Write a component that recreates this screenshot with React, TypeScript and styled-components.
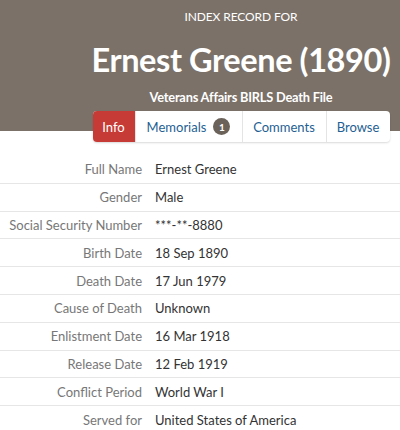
import React from "react";
import styled, { createGlobalStyle } from "styled-components";

const GlobalStyle = createGlobalStyle`
  html, body {
    margin: 0;
    padding: 0;
    background: #ffffff;
    font-family: Lato, "Noto Sans", sans-serif;
  }
`;

const Page = styled.div`
  width: 400px;
  height: 430px;
  overflow: hidden;
  background: #ffffff;
`;

const Header = styled.header`
  background: #7b7168;
  color: #ffffff;
  height: 131px;
  padding-left: 82px;
  display: flex;
  flex-direction: column;
  align-items: center;
  box-sizing: border-box;
`;

const Kicker = styled.div`
  margin-top: 9px;
  font-size: 12px;
  letter-spacing: -0.1px;
  line-height: 16px;
`;

const Title = styled.h1`
  margin: 15px 0 0;
  font-size: 32.5px;
  font-weight: 700;
  letter-spacing: -0.4px;
  line-height: 40px;
  white-space: nowrap;
`;

const Subtitle = styled.div`
  margin-top: 8px;
  font-size: 12.8px;
  font-weight: 700;
  letter-spacing: -0.2px;
  line-height: 18px;
`;

const TabsWrap = styled.div`
  padding-left: 82px;
  display: flex;
  justify-content: center;
  margin-top: -20px;
`;

const Tabs = styled.nav`
  display: flex;
  height: 31px;
  background: #ffffff;
  border-radius: 4px;
  box-shadow: 0 1px 2px rgba(0, 0, 0, 0.15);
`;

const Tab = styled.a<{ $active?: boolean; $w: number }>`
  width: ${(p) => p.$w}px;
  display: flex;
  align-items: center;
  justify-content: center;
  gap: 7px;
  font-size: 13px;
  color: ${(p) => (p.$active ? "#ffffff" : "#1f5f93")};
  background: ${(p) => (p.$active ? "#c63b36" : "transparent")};
  border-left: ${(p) => (p.$active ? "none" : "1px solid #e4e4e4")};
  &:first-child {
    border-radius: 4px 0 0 4px;
    border-left: none;
  }
  &:last-child {
    border-radius: 0 4px 4px 0;
  }
`;

const Badge = styled.span`
  width: 17px;
  height: 17px;
  border-radius: 50%;
  background: #6b6259;
  color: #ffffff;
  font-size: 10px;
  font-weight: 700;
  display: flex;
  align-items: center;
  justify-content: center;
`;

const Facts = styled.dl`
  margin: 14px 0 0;
`;

const FactRow = styled.div`
  display: grid;
  grid-template-columns: 142px 1fr;
  column-gap: 13px;
  height: 27.8px;
  align-items: center;
  border-bottom: 1px solid #e6e6e6;
  box-sizing: border-box;
  font-size: 13px;
`;

const Label = styled.dt`
  text-align: right;
  color: #777777;
  white-space: nowrap;
`;

const Value = styled.dd`
  margin: 0;
  color: #333333;
  white-space: nowrap;
`;

const facts: [string, string][] = [
  ["Full Name", "Ernest Greene"],
  ["Gender", "Male"],
  ["Social Security Number", "***-**-8880"],
  ["Birth Date", "18 Sep 1890"],
  ["Death Date", "17 Jun 1979"],
  ["Cause of Death", "Unknown"],
  ["Enlistment Date", "16 Mar 1918"],
  ["Release Date", "12 Feb 1919"],
  ["Conflict Period", "World War I"],
  ["Served for", "United States of America"],
];

export default function App() {
  return (
    <Page>
      <GlobalStyle />
      <Header>
        <Kicker>INDEX RECORD FOR</Kicker>
        <Title>Ernest Greene (1890)</Title>
        <Subtitle>Veterans Affairs BIRLS Death File</Subtitle>
      </Header>
      <TabsWrap>
        <Tabs>
          <Tab $active $w={42}>Info</Tab>
          <Tab $w={106}>
            Memorials <Badge>1</Badge>
          </Tab>
          <Tab $w={83}>Comments</Tab>
          <Tab $w={63}>Browse</Tab>
        </Tabs>
      </TabsWrap>
      <Facts>
        {facts.map(([label, value]) => (
          <FactRow key={label}>
            <Label>{label}</Label>
            <Value>{value}</Value>
          </FactRow>
        ))}
      </Facts>
    </Page>
  );
}
